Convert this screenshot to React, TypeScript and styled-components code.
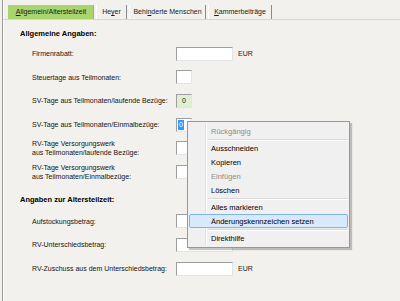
import styled, { createGlobalStyle } from 'styled-components'

const GlobalStyle = createGlobalStyle`
  html, body {
    margin: 0;
    padding: 0;
    background: #f2f1ed;
  }
`

const Window = styled.div`
  position: relative;
  width: 400px;
  height: 301px;
  overflow: hidden;
  background: #f2f1ed;
  font-family: "Liberation Sans", Arial, sans-serif;
  font-size: 7px;
  color: #141414;
`

const Frame = styled.div`
  height: 100%;
  margin-left: 2px;
  border-left: 1px solid #9c9c9c;
  box-shadow: inset 1px 0 0 #ffffff;
  display: flex;
  flex-direction: column;
`

const TabStrip = styled.div`
  display: flex;
  gap: 2px;
  margin-top: 5px;
  padding-left: 5px;
  height: 14px;
  border-bottom: 1px solid #d6d6d2;
`

const Tab = styled.div<{ $active?: boolean; $w: number }>`
  width: ${(p) => p.$w}px;
  box-sizing: border-box;
  display: flex;
  align-items: center;
  justify-content: center;
  line-height: 14px;
  white-space: nowrap;
  color: #1a1a1a;
  background: ${(p) => (p.$active ? '#a8d56c' : 'transparent')};
  border-left: 1px solid ${(p) => (p.$active ? '#a8d56c' : '#ffffff')};
  border-right: 1px solid ${(p) => (p.$active ? '#8fbf55' : '#8a8a8a')};
`

const Form = styled.div`
  padding-left: 17px;
  display: flex;
  flex-direction: column;
`

const Heading = styled.div<{ $top: number }>`
  margin-top: ${(p) => p.$top}px;
  line-height: 12px;
  font-size: 7.5px;
  font-weight: bold;
  color: #000;
`

const Rows = styled.div<{ $top: number }>`
  margin-top: ${(p) => p.$top}px;
  padding-left: 12px;
  display: grid;
  grid-auto-rows: 23.6px;
`

const Row = styled.div`
  display: grid;
  grid-template-columns: 144px auto;
  align-items: center;
`

const Label = styled.div`
  line-height: 9px;
`

const FieldLine = styled.div`
  display: flex;
  align-items: center;
  gap: 5px;
`

const Field = styled.div<{ $wide?: boolean; $green?: boolean }>`
  width: ${(p) => (p.$wide ? 57 : 16)}px;
  height: 14px;
  box-sizing: border-box;
  border: 1px solid;
  border-color: #9e9e9e #e4e4e4 #e4e4e4 #9e9e9e;
  background: ${(p) => (p.$green ? '#e0efd2' : '#ffffff')};
  display: flex;
  align-items: center;
  justify-content: center;
  color: #222;
`

const Selected = styled.span`
  margin-right: auto;
  margin-left: 1px;
  padding: 0 1px;
  line-height: 10px;
  background: #3399ff;
  color: #ffffff;
`

const Unit = styled.span`
  color: #1a1a1a;
`

const Menu = styled.div`
  position: absolute;
  left: 187px;
  top: 121px;
  width: 163px;
  box-sizing: border-box;
  padding: 2px 1px;
  background: #f0f0f0;
  border: 1px solid #979797;
  box-shadow: 2px 2px 1px rgba(0, 0, 0, 0.22);
  font-size: 7.5px;

  &::before {
    content: '';
    position: absolute;
    left: 17px;
    top: 1px;
    bottom: 1px;
    width: 1px;
    background: #e0e0e0;
    box-shadow: 1px 0 0 #ffffff;
  }
`

const Item = styled.div<{ $disabled?: boolean; $hot?: boolean }>`
  position: relative;
  height: 14px;
  box-sizing: border-box;
  padding-left: 21px;
  display: flex;
  align-items: center;
  color: ${(p) => (p.$disabled ? '#8c8c8c' : '#000000')};
  background: ${(p) => (p.$hot ? '#d9e9fc' : 'transparent')};
  border: 1px solid ${(p) => (p.$hot ? '#7db4ec' : 'transparent')};
  border-radius: 2px;
`

const Separator = styled.div`
  height: 3px;
  margin-left: 19px;
  display: flex;
  align-items: center;

  &::after {
    content: '';
    flex: 1;
    height: 1px;
    background: #d9d9d9;
    box-shadow: 0 1px 0 #ffffff;
  }
`

export default function App() {
  return (
    <Window>
      <GlobalStyle />
      <Frame>
        <TabStrip>
          <Tab $active $w={86}>
            <span><u>A</u>llgemein/Altersteilzeit</span>
          </Tab>
          <Tab $w={31}>
            <span>He<u>y</u>er</span>
          </Tab>
          <Tab $w={77}>
            <span>Behi<u>n</u>derte Menschen</span>
          </Tab>
          <Tab $w={64}>
            <span><u>K</u>ammerbeiträge</span>
          </Tab>
        </TabStrip>

        <Form>
          <Heading $top={8}>Allgemeine Angaben:</Heading>
          <Rows $top={2}>
            <Row>
              <Label>Firmenrabatt:</Label>
              <FieldLine>
                <Field $wide />
                <Unit>EUR</Unit>
              </FieldLine>
            </Row>
            <Row>
              <Label>Steuertage aus Teilmonaten:</Label>
              <FieldLine>
                <Field />
              </FieldLine>
            </Row>
            <Row>
              <Label>SV-Tage aus Teilmonaten/laufende Bezüge:</Label>
              <FieldLine>
                <Field $green>0</Field>
              </FieldLine>
            </Row>
            <Row>
              <Label>SV-Tage aus Teilmonaten/Einmalbezüge:</Label>
              <FieldLine>
                <Field>
                  <Selected>0</Selected>
                </Field>
              </FieldLine>
            </Row>
            <Row>
              <Label>
                RV-Tage Versorgungswerk
                <br />
                aus Teilmonaten/laufende Bezüge:
              </Label>
              <FieldLine>
                <Field />
              </FieldLine>
            </Row>
            <Row>
              <Label>
                RV-Tage Versorgungswerk
                <br />
                aus Teilmonaten/Einmalbezüge:
              </Label>
              <FieldLine>
                <Field />
              </FieldLine>
            </Row>
          </Rows>

          <Heading $top={10}>Angaben zur Altersteilzeit:</Heading>
          <Rows $top={4}>
            <Row>
              <Label>Aufstockungsbetrag:</Label>
              <FieldLine>
                <Field $wide />
                <Unit>EUR</Unit>
              </FieldLine>
            </Row>
            <Row>
              <Label>RV-Unterschiedsbetrag:</Label>
              <FieldLine>
                <Field $wide />
                <Unit>EUR</Unit>
              </FieldLine>
            </Row>
            <Row>
              <Label>RV-Zuschuss aus dem Unterschiedsbetrag:</Label>
              <FieldLine>
                <Field $wide />
                <Unit>EUR</Unit>
              </FieldLine>
            </Row>
          </Rows>
        </Form>
      </Frame>

      <Menu>
        <Item $disabled>Rückgängig</Item>
        <Separator />
        <Item>Ausschneiden</Item>
        <Item>Kopieren</Item>
        <Item $disabled>Einfügen</Item>
        <Item>Löschen</Item>
        <Separator />
        <Item>Alles markieren</Item>
        <Item $hot>Änderungskennzeichen setzen</Item>
        <Separator />
        <Item>Direkthilfe</Item>
      </Menu>
    </Window>
  )
}
